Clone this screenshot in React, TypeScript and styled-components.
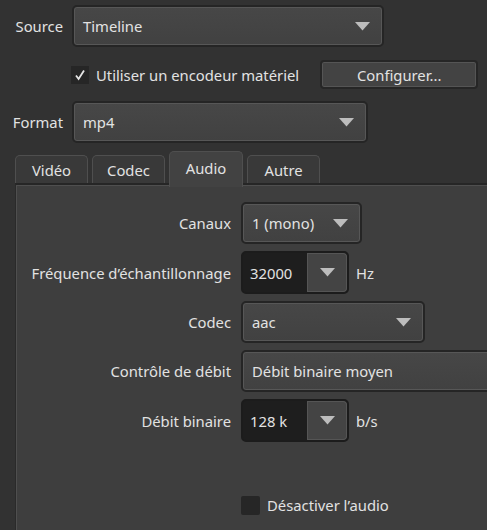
import styled, { createGlobalStyle } from 'styled-components';

const GlobalStyle = createGlobalStyle`
  html, body {
    margin: 0;
    padding: 0;
    background: #323232;
  }
`;

function Arrow() {
  return (
    <svg width="15" height="9" viewBox="0 0 15 9">
      <path d="M0 0 H15 L7.5 8.5 Z" fill="#bdbdbd" />
    </svg>
  );
}

function Tick() {
  return (
    <svg width="12" height="12" viewBox="0 0 12 12">
      <path d="M2 6.5 L4.6 10 L10 1.5" stroke="#e6e6e6" strokeWidth="1.8" fill="none" />
    </svg>
  );
}

interface ComboProps {
  value: string
  width: number
}

function Combo({ value, width }: ComboProps) {
  return (
    <ComboBox style={{ width }}>
      <ComboText>{value}</ComboText>
      <Arrow />
    </ComboBox>
  );
}

function Spin({ value, unit }: { value: string; unit: string }) {
  return (
    <Block>
      <SpinBox>
        <SpinEdit>{value}</SpinEdit>
        <SpinButton><Arrow /></SpinButton>
      </SpinBox>
      <Unit>{unit}</Unit>
    </Block>
  );
}

function App() {
  return (
    <Page>
      <GlobalStyle />
      <Row mt={5}>
        <TopLabel>Source</TopLabel>
        <Combo value="Timeline" width={312} />
      </Row>
      <CheckRow>
        <Check><Tick /></Check>
        <CheckText>Utiliser un encodeur matériel</CheckText>
        <Button>Configurer...</Button>
      </CheckRow>
      <Row mt={12}>
        <TopLabel>Format</TopLabel>
        <Combo value="mp4" width={296} />
      </Row>
      <Tabs>
        <Tab>Vidéo</Tab>
        <Tab>Codec</Tab>
        <Tab active>Audio</Tab>
        <Tab>Autre</Tab>
      </Tabs>
      <Panel>
        <Form>
          <Label>Canaux</Label>
          <Combo value="1 (mono)" width={121} />
          <Label>Fréquence d’échantillonnage</Label>
          <Spin value="32000" unit="Hz" />
          <Label>Codec</Label>
          <Combo value="aac" width={184} />
          <Label>Contrôle de débit</Label>
          <Combo value="Débit binaire moyen" width={300} />
          <Label>Débit binaire</Label>
          <Spin value="128 k" unit="b/s" />
          <Spacer />
          <span />
          <Block>
            <EmptyCheck />
            <CheckText>Désactiver l’audio</CheckText>
          </Block>
        </Form>
      </Panel>
    </Page>
  );
}

export default App;

const Page = styled.div`
  width: 487px;
  height: 530px;
  overflow: hidden;
  background: #323232;
  color: #e2e2e2;
  font-family: 'Noto Sans', 'Open Sans', sans-serif;
  font-size: 14.8px;
`;

const Row = styled.div<{ mt: number }>`
  display: flex;
  align-items: center;
  gap: 9px;
  margin-top: ${p => p.mt}px;
`;

const TopLabel = styled.div`
  width: 63px;
  text-align: right;
`;

const ComboBox = styled.div`
  box-sizing: border-box;
  height: 42px;
  display: flex;
  align-items: center;
  justify-content: space-between;
  padding: 0 12px 0 9px;
  border: 2px solid #252525;
  border-radius: 5px;
  background: linear-gradient(#474747, #414141);
  box-shadow: inset 0 0 0 1px #575757;
`;

const ComboText = styled.span`
  white-space: nowrap;
`;

const CheckRow = styled.div`
  display: flex;
  align-items: center;
  margin-top: 13px;
  padding-left: 71px;
  height: 29px;
`;

const Check = styled.div`
  width: 18px;
  height: 18px;
  background: #262626;
  display: flex;
  align-items: center;
  justify-content: center;
  margin-right: 7px;
`;

const EmptyCheck = styled(Check)`
  width: 19px;
  height: 19px;
  border-radius: 2px;
`;

const CheckText = styled.span`
  white-space: nowrap;
`;

const Button = styled.div`
  box-sizing: border-box;
  margin-left: 21px;
  width: 158px;
  height: 29px;
  display: flex;
  align-items: center;
  justify-content: center;
  border: 2px solid #262626;
  border-radius: 4px;
  background: #434343;
  box-shadow: inset 0 0 0 1px #555;
`;

const Tabs = styled.div`
  display: flex;
  align-items: flex-end;
  gap: 4px;
  margin-top: 8px;
  padding-left: 15px;
  height: 32px;
`;

const Tab = styled.div<{ active?: boolean }>`
  box-sizing: border-box;
  height: ${p => (p.active ? 36 : 28)}px;
  width: ${p => (p.active ? 74 : 73)}px;
  margin-bottom: ${p => (p.active ? -4 : 0)}px;
  display: flex;
  align-items: center;
  justify-content: center;
  padding-bottom: ${p => (p.active ? 3 : 0)}px;
  border: 1px solid #4f4f4f;
  border-bottom: none;
  border-radius: 5px 5px 0 0;
  background: ${p => (p.active ? '#424242' : '#393939')};
  position: relative;
  z-index: ${p => (p.active ? 2 : 0)};
`;

const Panel = styled.div`
  margin-left: 15px;
  border-top: 2px solid #262626;
  height: 360px;
  background: #3e3e3e;
  box-shadow: inset 1px 1px 0 #4f4f4f;
  border-left: 1px solid #2a2a2a;
`;

const Form = styled.div`
  display: grid;
  grid-template-columns: 215px auto;
  column-gap: 10px;
  row-gap: 7px;
  align-items: center;
  padding-top: 17px;
`;

const Label = styled.div`
  text-align: right;
  white-space: nowrap;
`;

const Block = styled.div`
  display: flex;
  align-items: center;
`;

const SpinBox = styled.div`
  box-sizing: border-box;
  width: 108px;
  height: 43px;
  display: flex;
  border: 2px solid #1c1c1c;
  border-radius: 5px;
  overflow: hidden;
  background: #1e1e1e;
`;

const SpinEdit = styled.div`
  flex: 1;
  display: flex;
  align-items: center;
  padding-left: 7px;
`;

const SpinButton = styled.div`
  width: 40px;
  display: flex;
  align-items: center;
  justify-content: center;
  background: #444;
  box-shadow: inset 0 0 0 1px #555;
  border-radius: 0 4px 4px 0;
`;

const Unit = styled.span`
  margin-left: 7px;
`;

const Spacer = styled.div`
  grid-column: 1 / -1;
  height: 39px;
`;
